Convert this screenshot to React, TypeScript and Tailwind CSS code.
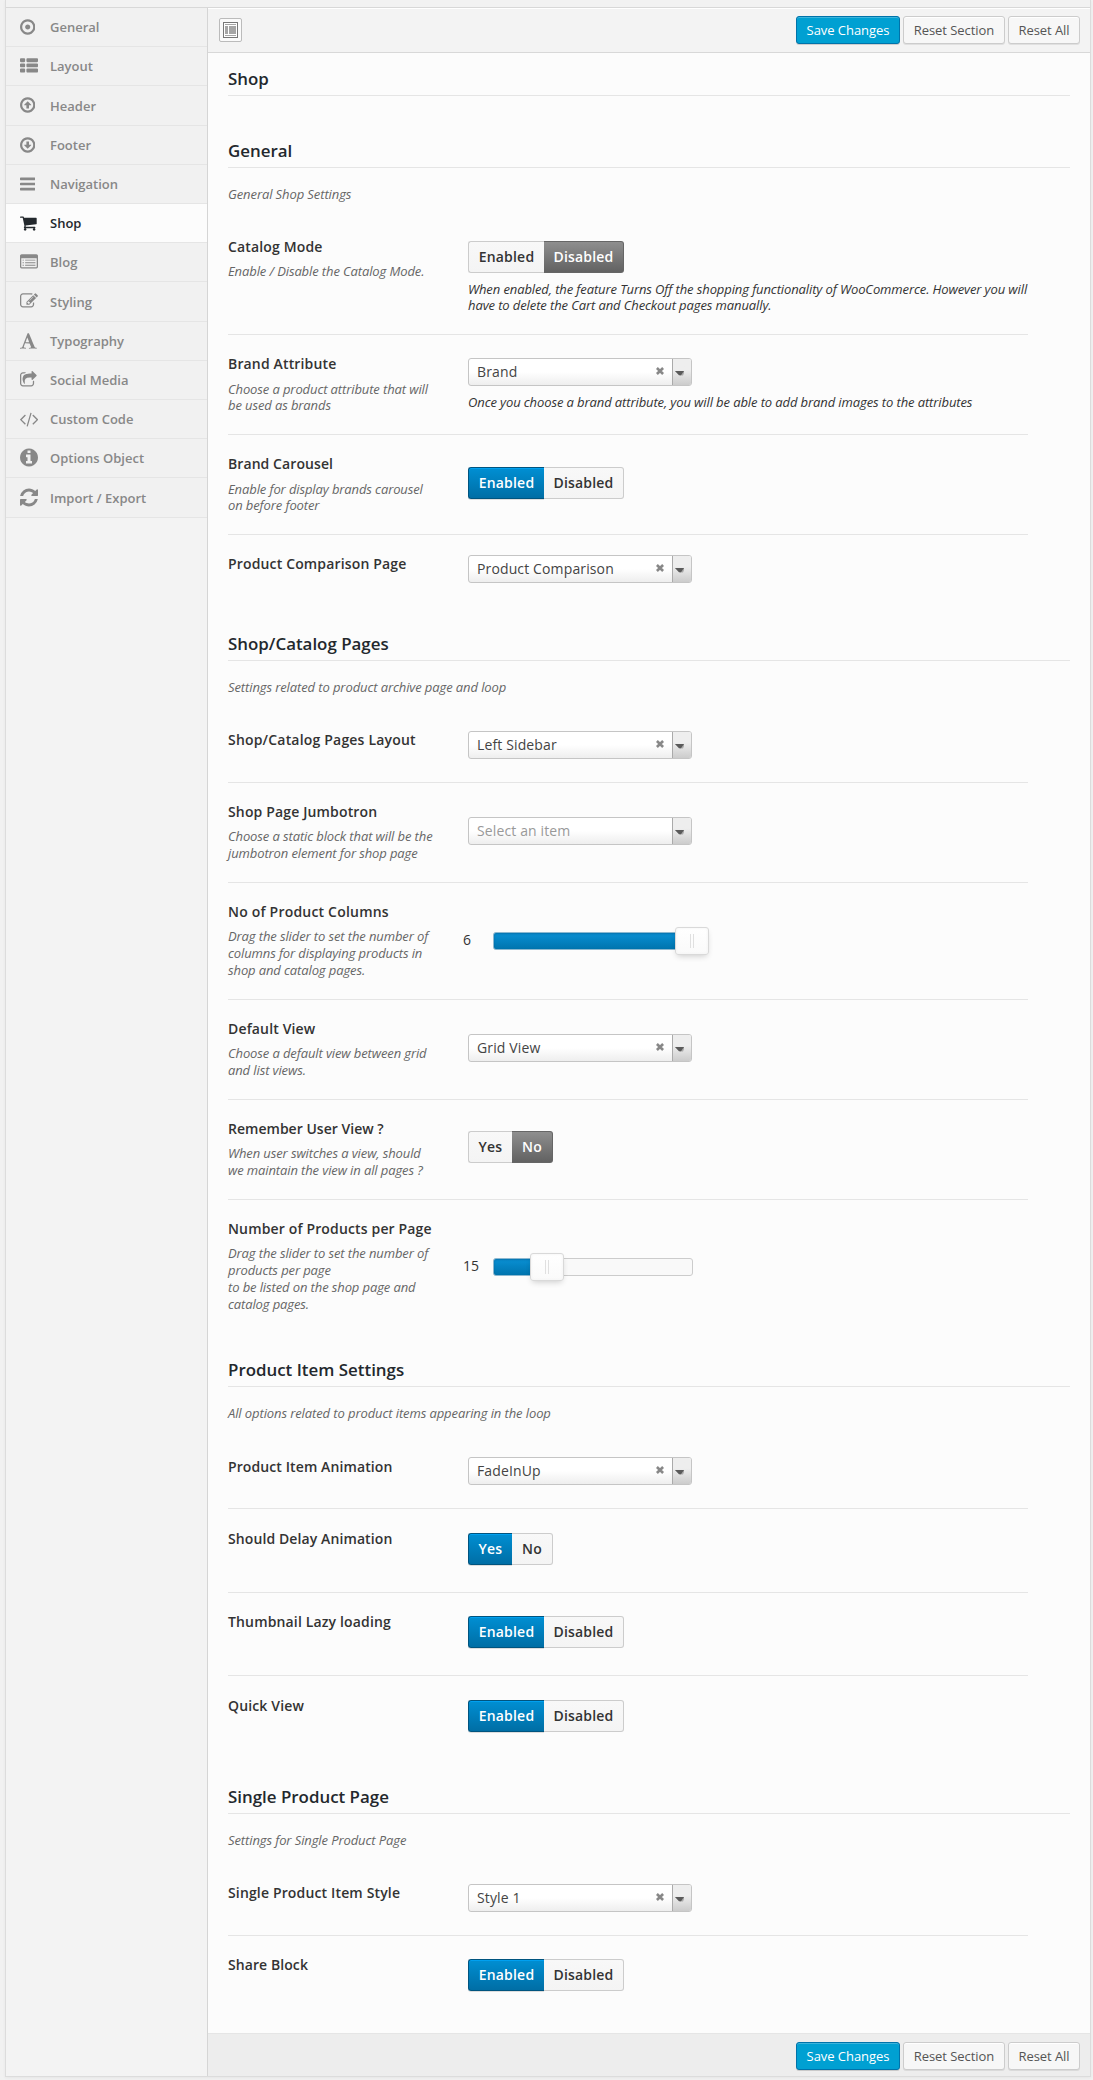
import type { ReactNode } from "react";

type Glyph = { x: number; w: number; d: string; size?: string };

const RING =
  "M896 352q-148 0-273 73t-198 198-73 273 73 273 198 198 273 73 273-73 198-198 73-273-73-273-198-198-273-73zm768 544q0 209-103 385.5t-279.5 279.5-385.5 103-385.5-103-279.5-279.5-103-385.5 103-385.5 279.5-279.5 385.5-103 385.5 103 279.5 279.5 103 385.5z";

const narrow = "w-[15.4px] h-[18px]";
const medium = "w-[16.7px] h-[18px]";
const wide = "w-[18px] h-[18px]";

const glyphs: Record<string, Glyph> = {
  dot: { x: 128, w: 1536, size: narrow, d: RING + "M1152 896q0 106-75 181t-181 75-181-75-75-181 75-181 181-75 181 75 75 181z" },
  list: {
    x: 0, w: 1792, size: wide,
    d: "M512 1248v192q0 40-28 68t-68 28h-320q-40 0-68-28t-28-68v-192q0-40 28-68t68-28h320q40 0 68 28t28 68zm0-512v192q0 40-28 68t-68 28h-320q-40 0-68-28t-28-68v-192q0-40 28-68t68-28h320q40 0 68 28t28 68zm1280 512v192q0 40-28 68t-68 28h-960q-40 0-68-28t-28-68v-192q0-40 28-68t68-28h960q40 0 68 28t28 68zm-1280-1024v192q0 40-28 68t-68 28h-320q-40 0-68-28t-28-68v-192q0-40 28-68t68-28h320q40 0 68 28t28 68zm1280 512v192q0 40-28 68t-68 28h-960q-40 0-68-28t-28-68v-192q0-40 28-68t68-28h960q40 0 68 28t28 68zm0-512v192q0 40-28 68t-68 28h-960q-40 0-68-28t-28-68v-192q0-40 28-68t68-28h960q40 0 68 28t28 68z",
  },
  up: { x: 128, w: 1536, size: narrow, d: RING + "M896 510l350 350v50h-220v340h-260v-340h-220v-50z" },
  down: { x: 128, w: 1536, size: narrow, d: RING + "M896 1282l350-350v-50h-220v-340h-260v340h-220v50z" },
  bars: {
    x: 128, w: 1536, size: narrow,
    d: "M1664 1344v128q0 26-19 45t-45 19h-1408q-26 0-45-19t-19-45v-128q0-26 19-45t45-19h1408q26 0 45 19t19 45zm0-512v128q0 26-19 45t-45 19h-1408q-26 0-45-19t-19-45v-128q0-26 19-45t45-19h1408q26 0 45 19t19 45zm0-512v128q0 26-19 45t-45 19h-1408q-26 0-45-19t-19-45v-128q0-26 19-45t45-19h1408q26 0 45 19t19 45z",
  },
  cart: {
    x: 64, w: 1664, size: medium,
    d: "M704 1536q0 52-38 90t-90 38-90-38-38-90 38-90 90-38 90 38 38 90zm896 0q0 52-38 90t-90 38-90-38-38-90 38-90 90-38 90 38 38 90zm128-1088v512q0 24-16.500 42.500t-40.500 21.500l-1044 122q13 60 13 70 0 16-24 64h920q26 0 45 19t19 45-19 45-45 19h-1024q-26 0-45-19t-19-45q0-11 8-31.500t16-36 21.500-40 15.500-29.500l-177-823h-204q-26 0-45-19t-19-45 19-45 45-19h256q16 0 28.500 6.500t19.500 15.500 13 24.500 8 26 5.500 29.500 4.500 26h1201q26 0 45 19t19 45z",
  },
  listAlt: {
    x: 0, w: 1792, size: wide,
    d: "M256 1180h128v90h-128zM256 920h128v90h-128zM256 660h128v90h-128zM512 1180h1024v90h-1024zM512 920h1024v90h-1024zM512 660h1024v90h-1024zM1664 1376v-832q0-13-9.500-22.500t-22.500-9.500h-1472q-13 0-22.500 9.500t-9.500 22.500v832q0 13 9.500 22.500t22.500 9.500h1472q13 0 22.500-9.500t9.500-22.500zm128-1088v1088q0 66-47 113t-113 47h-1472q-66 0-113-47t-47-113v-1088q0-66 47-113t113-47h1472q66 0 113 47t47 113z",
  },
  edit: {
    x: 0, w: 1792, size: wide,
    d: "M888 1184l116-116-152-152-116 116v56h96v96h56zm440-720q-16-16-33 1l-350 350q-17 17-1 33t33-1l350-350q17-17 1-33zm80 594v190q0 119-84.500 203.500t-203.500 84.500h-832q-119 0-203.500-84.500t-84.500-203.500v-832q0-119 84.500-203.500t203.500-84.500h832q63 0 117 25 15 7 18 23 3 17-9 29l-49 49q-14 14-32 8-23-6-45-6h-832q-66 0-113 47t-47 113v832q0 66 47 113t113 47h832q66 0 113-47t47-113v-126q0-13 9-22l64-64q15-15 35-7t20 29zm-96-738l288 288-672 672h-288v-288zm444 132l-92 92-288-288 92-92q28-28 68-28t68 28l152 152q28 28 28 68t-28 68z",
  },
  font: {
    x: 64, w: 1664, size: medium,
    d: "M789 559l-170 450q33 0 136.500 2t160.500 2q19 0 57-2-87-253-184-452zm-725 1105l2-79q23-7 56-12.500t57-10.500 49.500-14.500 44.500-29 31-50.500l237-616 280-724h128q8 14 11 21l205 480q33 78 106 257.500t114 274.500q15 34 58 144.500t72 168.500q20 45 35 57 19 15 88 29.500t84 20.500q6 38 6 57 0 5-.5 13.500t-.5 12.500q-63 0-190-8t-191-8q-76 0-215 7t-178 8q0-43 4-78l131-28q1 0 12.500-2.500t15.500-3.500 14.500-4.500 15-6.500 11-8 9-11 2.500-14q0-16-31-96.500t-72-177.500-42-100l-450-2q-26 58-76.500 195.500t-50.500 162.500q0 22 14 37.500t43.500 24.500 48.500 13.500 57 8.500 41 4q1 19 1 58 0 9-2 27-58 0-174.500-10t-174.500-10q-8 0-26.500 4t-21.500 4q-80 14-188 14z",
  },
  share: {
    x: 64, w: 1664, size: medium,
    d: "M1472 989v259q0 119-84.500 203.500t-203.500 84.500h-832q-119 0-203.500-84.500t-84.500-203.500v-832q0-119 84.500-203.500t203.500-84.500h255q13 0 22.500 9.500t9.500 22.500q0 27-26 32-77 26-133 60-10 4-16 4h-112q-66 0-113 47t-47 113v832q0 66 47 113t113 47h832q66 0 113-47t47-113v-214q0-19 18-29 28-13 54-37 16-16 35-8 21 9 21 29zm237-496l-384 384q-18 19-45 19-12 0-25-5-39-17-39-59v-192h-160q-323 0-438 131-119 137-74 473 3 23-20 34-8 2-12 2-16 0-26-13-10-14-21-31t-39.500-68.500-49.500-99.500-38.500-114-17.500-122q0-49 3.500-91t14-90 28-88 47-81.500 68.500-74 94.500-61.500 124.500-48.500 159.500-30.500 196.500-11h160v-192q0-42 39-59 13-5 25-5 26 0 45 19l384 384q19 19 19 45t-19 45z",
  },
  code: {
    x: -9, w: 1820, size: "w-[18.3px] h-[18px]",
    d: "M553 1399l-50 50q-10 10-23 10t-23-10l-466-466q-10-10-10-23t10-23l466-466q10-10 23-10t23 10l50 50q10 10 10 23t-10 23l-393 393 393 393q10 10 10 23t-10 23zm591-1067l-373 1291q-4 13-15.500 19.500t-23.500 2.500l-62-17q-13-4-19.500-15.500t-2.500-24.500l373-1291q4-13 15.500-19.500t23.500-2.500l62 17q13 4 19.500 15.500t2.500 24.500zm657 651l-466 466q-10 10-23 10t-23-10l-50-50q-10-10-10-23t10-23l393-393-393-393q-10-10-10-23t10-23l50-50q10-10 23-10t23 10l466 466q10 10 10 23t-10 23z",
  },
  info: {
    x: 128, w: 1536, size: "w-[18px] h-[21px]",
    d: "M1152 1376v-160q0-14-9-23t-23-9h-96v-512q0-14-9-23t-23-9h-320q-14 0-23 9t-9 23v160q0 14 9 23t23 9h96v320h-96q-14 0-23 9t-9 23v160q0 14 9 23t23 9h448q14 0 23-9t9-23zm-128-896v-160q0-14-9-23t-23-9h-192q-14 0-23 9t-9 23v160q0 14 9 23t23 9h192q14 0 23-9t9-23zm640 416q0 209-103 385.500t-279.500 279.500-385.500 103-385.500-103-279.500-279.500-103-385.500 103-385.500 279.500-279.500 385.500-103 385.500 103 279.500 279.500 103 385.500z",
  },
  refresh: {
    x: 128, w: 1536, size: "w-[18px] h-[21px]",
    d: "M1639 1056q0 5-1 7-64 268-268 434.500t-478 166.500q-146 0-282.500-55t-243.500-157l-129 129q-19 19-45 19t-45-19-19-45v-448q0-26 19-45t45-19h448q26 0 45 19t19 45-19 45l-137 137q71 66 161 102t187 36q134 0 250-65t186-179q11-17 53-117 8-23 30-23h192q13 0 22.500 9.500t9.500 22.500zm25-800v448q0 26-19 45t-45 19h-448q-26 0-45-19t-19-45 19-45l138-138q-148-137-349-137-134 0-250 65t-186 179q-11 17-53 117-8 23-30 23h-199q-13 0-22.500-9.500t-9.500-22.500v-7q65-268 270-434.500t480-166.500q146 0 284 55.500t245 156.500l130-129q19-19 45-19t45 19 19 45z",
  },
};

const menu = [
  { icon: "dot", label: "General" },
  { icon: "list", label: "Layout" },
  { icon: "up", label: "Header", tall: true },
  { icon: "down", label: "Footer" },
  { icon: "bars", label: "Navigation" },
  { icon: "cart", label: "Shop", active: true },
  { icon: "listAlt", label: "Blog" },
  { icon: "edit", label: "Styling", tall: true },
  { icon: "font", label: "Typography" },
  { icon: "share", label: "Social Media" },
  { icon: "code", label: "Custom Code" },
  { icon: "info", label: "Options Object" },
  { icon: "refresh", label: "Import / Export", tall: true },
];

function MenuIcon({ name }: { name: string }) {
  const g = glyphs[name];
  return (
    <svg className={`${g.size} shrink-0`} viewBox={`${g.x} 0 ${g.w} 1792`} fill="currentColor">
      <path d={g.d} />
    </svg>
  );
}

function Sidebar() {
  return (
    <nav className="w-[202px] shrink-0 border-r border-[#d5d5d5] bg-[#f3f3f3]">
      {menu.map((m) => (
        <a
          key={m.label}
          className={`flex items-center border-b border-[#e5e5e5] pl-[14px] text-[13px] leading-[20px] font-semibold ${
            m.tall ? "h-[40px]" : "h-[39px]"
          } ${m.active ? "bg-[#fcfcfc] text-[#23282d]" : "bg-[#f1f1f1] text-[#888888]"}`}
        >
          <span className="flex w-[30px] items-center pb-px">
            <MenuIcon name={m.icon} />
          </span>
          <span>{m.label}</span>
        </a>
      ))}
    </nav>
  );
}

function Actions() {
  const plain =
    "flex h-[28px] items-center justify-center rounded-[3px] border border-[#cccccc] bg-[#f7f7f7] text-[#555555] shadow-[inset_0_1px_0_#fff,0_1px_0_rgba(0,0,0,0.08)]";
  return (
    <div className="flex gap-[3px] text-[13px] leading-[20px] tracking-[-0.05px]">
      <button className="flex h-[28px] w-[104px] items-center justify-center rounded-[3px] border border-[#0073aa] bg-[#00a0d2] text-white shadow-[inset_0_1px_0_rgba(120,200,230,0.5),0_1px_0_rgba(0,0,0,0.15)]">
        Save Changes
      </button>
      <button className={`${plain} w-[102px]`}>Reset Section</button>
      <button className={`${plain} w-[72px]`}>Reset All</button>
    </div>
  );
}

function Select({ value, placeholder }: { value?: string; placeholder?: string }) {
  return (
    <div className="flex h-[28px] w-[224px] overflow-hidden rounded-[3px] border border-[#c5c5c5] bg-linear-to-b from-white from-50% to-[#eeeeee] text-[14px] tracking-[0.13px]">
      <span className={`flex flex-1 items-center pb-px pl-[8px] ${value ? "text-[#444444]" : "text-[#999999]"}`}>
        {value ?? placeholder}
      </span>
      {value && (
        <svg className="mt-[8px] mr-[8px] h-[8px] w-[8px]" viewBox="0 0 8 8" stroke="#888" strokeWidth="2.700">
          <path d="M0.900 1L7.100 7M7.100 1L0.900 7" />
        </svg>
      )}
      <span className="w-[19px] border-l border-[#aaaaaa] bg-linear-to-b from-[#eeeeee] from-40% to-[#cccccc] pt-[12px] pl-[2px]">
        <svg className="h-[5px] w-[9px]" viewBox="0 0 9 5">
          <path d="M0 0H9V2L8 4.500H5z" fill="#aaa" />
          <path d="M0 0H9L6 4.300H4z" fill="#5a5a5a" />
        </svg>
      </span>
    </div>
  );
}

function Toggle({ on, off, value, onWidth, offWidth }: { on: string; off: string; value: boolean; onWidth: string; offWidth: string }) {
  const cell = "flex items-center justify-center border-y pb-px";
  const idle = "border-[#cccccc] bg-linear-to-b from-[#f8f8f8] to-[#f4f4f4] text-[#333333]";
  return (
    <div className="flex h-[32px] text-[14px] font-semibold tracking-[0.2px]">
      <span
        className={`${cell} ${onWidth} rounded-l-[3px] border-l ${
          value
            ? "border-[#00547f] bg-linear-to-b from-[#008fd3] to-[#006ea5] text-white shadow-[inset_0_1px_0_#00a0f0,0_1px_0_rgba(0,0,0,0.12)]"
            : idle
        }`}
      >
        {on}
      </span>
      <span
        className={`${cell} ${offWidth} rounded-r-[3px] border-r ${
          value ? idle : "border-[#666666] bg-linear-to-b from-[#8e8e8e] to-[#626262] text-white"
        }`}
      >
        {off}
      </span>
    </div>
  );
}

function Enabled({ value = true }: { value?: boolean }) {
  return <Toggle on="Enabled" off="Disabled" value={value} onWidth="w-[76px]" offWidth="w-[80px]" />;
}

function YesNo({ value }: { value: boolean }) {
  return <Toggle on="Yes" off="No" value={value} onWidth="w-[44px]" offWidth="w-[41px]" />;
}

function Slider({ value, at }: { value: number; at: number }) {
  return (
    <div className="-ml-[5px] flex h-[28px] items-center">
      <span className="w-[30px] pb-[3px] text-[14px] text-[#333333]">{value}</span>
      <div className="relative flex h-[18px] w-[200px] rounded-[3px] border border-[#cccccc] bg-[#f9f9f9]">
        <div
          className="-my-px -ml-px rounded-l-[3px] border border-[#8cb8d0] bg-linear-to-b from-[#0a90d4] to-[#0074ae] shadow-[inset_0_1px_2px_rgba(0,60,100,0.35)]"
          style={{ width: at + 4 }}
        />
        <span
          className="absolute -top-[6px] flex h-[28px] w-[34px] items-center justify-center gap-[2px] rounded-[3px] border border-[#d9d9d9] bg-linear-to-b from-white to-[#fafafa] shadow-[inset_0_0_3px_#f0f0f0,0_3px_6px_-2px_rgba(0,0,0,0.2)]"
          style={{ left: at }}
        >
          <i className="h-[14px] w-px bg-[#e0e0e0]" />
          <i className="h-[14px] w-px bg-[#e0e0e0]" />
        </span>
      </div>
    </div>
  );
}

function Heading({ children, height = "h-[72px]" }: { children: ReactNode; height?: string }) {
  return (
    <h2 className={`${height} flex items-end border-b border-[#e5e5e5] pb-[6px] text-[16.9px] leading-[20px] font-semibold text-[#23282d]`}>
      {children}
    </h2>
  );
}

function Section({ title, note, children }: { title: string; note: string; children: ReactNode }) {
  return (
    <section>
      <Heading>{title}</Heading>
      <p className="h-[50px] pt-[17.500px] text-[13px] leading-[17px] tracking-[-0.1px] text-[#666666] italic">{note}</p>
      {children}
    </section>
  );
}

type RowProps = {
  title: string;
  lines?: string[];
  tight?: boolean;
  height: string;
  pad: string;
  labelPad?: string;
  spacing?: string;
  last?: boolean;
  help?: string[];
  children: ReactNode;
};

function Row({
  title,
  lines = [],
  tight,
  height,
  pad,
  labelPad = "pt-[19px]",
  spacing = "tracking-[0.15px]",
  last,
  help = [],
  children,
}: RowProps) {
  return (
    <div className={`flex w-[800px] ${height} ${last ? "" : "border-b border-[#e5e5e5]"}`}>
      <div className={`w-[240px] shrink-0 ${labelPad}`}>
        <h3 className={`text-[14px] leading-[20px] font-semibold text-[#333333] ${spacing}`}>{title}</h3>
        <div className={`text-[13px] tracking-[-0.11px] whitespace-nowrap text-[#666666] italic ${tight ? "pt-[7px] leading-[16px]" : "pt-[5.500px] leading-[17px]"}`}>
          {lines.map((l) => (
            <p key={l}>{l}</p>
          ))}
        </div>
      </div>
      <div className={pad}>
        {children}
        <div className="pt-[8px] text-[13px] leading-[16px] tracking-[-0.105px] whitespace-nowrap text-[#333333] italic">
          {help.map((l) => (
            <p key={l}>{l}</p>
          ))}
        </div>
      </div>
    </div>
  );
}

export default function App() {
  return (
    <div className="h-[2080px] w-[1093px] overflow-hidden bg-[#f1f1f1] font-['Open_Sans',sans-serif]">
      <div className="ml-[5px] flex h-[2077px] w-[1086px] flex-col border-x border-b border-[#dcdcdc] shadow-[0_1px_3px_rgba(0,0,0,0.05)]">
        <div className="h-[8px] shrink-0 border-b border-[#d8d8d8] bg-[#f2f2f2]" />
        <div className="flex flex-1">
          <Sidebar />
          <main className="flex flex-1 flex-col bg-[#fcfcfc]">
            <div className="flex h-[45px] items-start justify-between border-t border-b border-t-white border-b-[#d8d8d8] bg-[#f3f3f3] pr-[10px] pl-[11px]">
              <button className="mt-[9px] flex h-[24px] w-[23px] items-center justify-center rounded-[2px] border border-[#bbbbbb] bg-[#fafafa]">
                <svg className="h-[16px] w-[15px]" viewBox="0 0 15 16">
                  <rect x="0.500" y="0.500" width="14" height="15" fill="#fff" stroke="#777" />
                  <path d="M2 2h11v1H2zM2 13h11v1H2zM2 4h3v8H2zM6 4h7v8H6z" fill="#a5a5a5" />
                </svg>
              </button>
              <div className="mt-[7px]">
                <Actions />
              </div>
            </div>
            <div className="flex-1 pr-[20px] pl-[20px]">
              <Heading height="h-[43px]">Shop</Heading>

              <Section title="General" note="General Shop Settings">
                <Row
                  title="Catalog Mode"
                  lines={["Enable / Disable the Catalog Mode."]}
                  height="h-[117px]"
                  pad="pt-[23px]"
                  help={[
                    "When enabled, the feature Turns Off the shopping functionality of WooCommerce. However you will",
                    "have to delete the Cart and Checkout pages manually.",
                  ]}
                >
                  <Enabled value={false} />
                </Row>
                <Row
                  title="Brand Attribute"
                  lines={["Choose a product attribute that will", "be used as brands"]}
                  tight
                  height="h-[100px]"
                  pad="pt-[23px]"
                  help={["Once you choose a brand attribute, you will be able to add brand images to the attributes"]}
                >
                  <Select value="Brand" />
                </Row>
                <Row
                  title="Brand Carousel"
                  spacing="tracking-[0.08px]"
                  lines={["Enable for display brands carousel", "on before footer"]}
                  tight
                  height="h-[100px]"
                  pad="pt-[32px]"
                >
                  <Enabled />
                </Row>
                <Row title="Product Comparison Page" height="h-[54px]" pad="pt-[20px]" last>
                  <Select value="Product Comparison" />
                </Row>
              </Section>

              <Section title="Shop/Catalog Pages" note="Settings related to product archive page and loop">
                <Row title="Shop/Catalog Pages Layout" spacing="tracking-[0.19px]" height="h-[72px]" pad="pt-[20px]">
                  <Select value="Left Sidebar" />
                </Row>
                <Row title="Shop Page Jumbotron" lines={["Choose a static block that will be the", "jumbotron element for shop page"]} height="h-[100px]" pad="pt-[34px]">
                  <Select placeholder="Select an item" />
                </Row>
                <Row
                  title="No of Product Columns"
                  spacing="tracking-[0.2px]"
                  lines={["Drag the slider to set the number of", "columns for displaying products in", "shop and catalog pages."]}
                  height="h-[117px]"
                  pad="pt-[44px]"
                >
                  <Slider value={6} at={181} />
                </Row>
                <Row title="Default View" lines={["Choose a default view between grid", "and list views."]} height="h-[100px]" pad="pt-[34px]">
                  <Select value="Grid View" />
                </Row>
                <Row
                  title="Remember User View ?"
                  spacing="tracking-[0.02px]"
                  lines={["When user switches a view, should", "we maintain the view in all pages ?"]}
                  height="h-[100px]"
                  pad="pt-[31px]"
                >
                  <YesNo value={false} />
                </Row>
                <Row
                  title="Number of Products per Page"
                  lines={["Drag the slider to set the number of", "products per page", "to be listed on the shop page and", "catalog pages."]}
                  height="h-[115px]"
                  pad="pt-[53px]"
                  last
                >
                  <Slider value={15} at={36} />
                </Row>
              </Section>

              <Section title="Product Item Settings" note="All options related to product items appearing in the loop">
                <Row title="Product Item Animation" spacing="tracking-[0.1px]" labelPad="pt-[20px]" height="h-[72px]" pad="pt-[20px]">
                  <Select value="FadeInUp" />
                </Row>
                <Row title="Should Delay Animation" spacing="tracking-[0.1px]" labelPad="pt-[20px]" height="h-[84px]" pad="pt-[24px]">
                  <YesNo value={true} />
                </Row>
                <Row title="Thumbnail Lazy loading" height="h-[83px]" pad="pt-[23px]">
                  <Enabled />
                </Row>
                <Row title="Quick View" labelPad="pt-[20px]" height="h-[66px]" pad="pt-[24px]" last>
                  <Enabled />
                </Row>
              </Section>

              <Section title="Single Product Page" note="Settings for Single Product Page">
                <Row title="Single Product Item Style" height="h-[72px]" pad="pt-[20px]">
                  <Select value="Style 1" />
                </Row>
                <Row title="Share Block" spacing="tracking-[0.08px]" height="h-[70px]" pad="pt-[23px]" last>
                  <Enabled />
                </Row>
              </Section>
            </div>
            <div className="flex h-[43px] shrink-0 items-start justify-end border-t border-[#e5e5e5] bg-[#ededed] pt-[8px] pr-[10px]">
              <Actions />
            </div>
          </main>
        </div>
      </div>
    </div>
  );
}
